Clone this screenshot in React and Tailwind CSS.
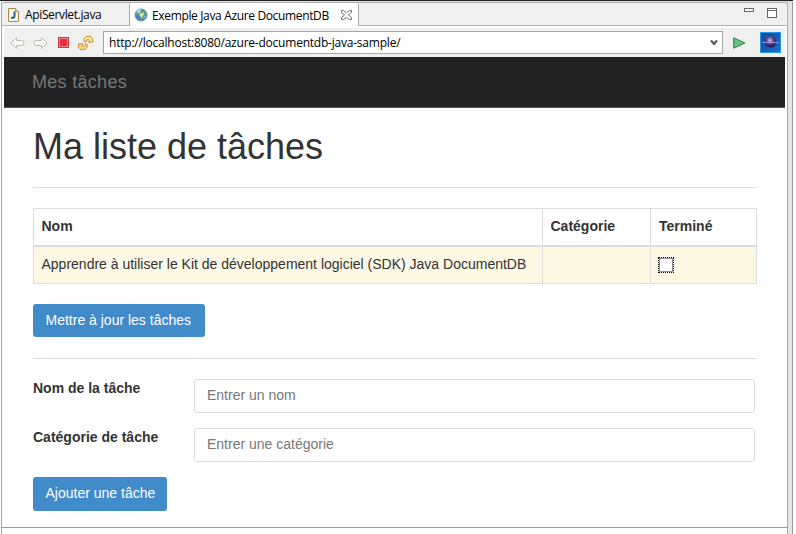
import React from 'react';

function JavaFile() {
  return (
    <svg className="h-[14px] w-[11px] shrink-0" viewBox="0 0 11 14">
      <path d="M.5.5h7l3 3v10H.5z" fill="#fdfbe9" stroke="#a88a45" />
      <path d="M7.500.5v3h3" fill="#f1dc9b" stroke="#c49b3e" />
      <path d="M6.500 3.500V8q0 2.300-3.500 1.600" fill="none" stroke="#28609b" strokeWidth="2" />
    </svg>
  );
}

function Globe() {
  return (
    <svg className="h-[14px] w-[14px] shrink-0" viewBox="0 0 14 14">
      <circle cx="7" cy="7" r="6" fill="#3f86c8" stroke="#6b8fb0" />
      <path d="M1.500 6l2-4 3-1 1 2-2 2-2 .5z" fill="#a8d5ee" />
      <path d="M3 4l3 2 2-4 3 1.500 1 2.500-2 2-2 4-2-1-1-3-3-2z" fill="#5fa374" />
      <path d="M5 3l2 3 3-2-.5 3-2 3-2-3z" fill="#eee3a0" />
      <path d="M10 8l2-.5-1 2.500-2 1z" fill="#7cc0ea" />
    </svg>
  );
}

function Arrow({ right }) {
  return (
    <svg className={right ? 'h-3 w-[15px] shrink-0 -scale-x-100' : 'h-3 w-[15px] shrink-0'} viewBox="0 0 15 12">
      <path d="M.8 6l5.700-5.300V3.500H12q2 0 2 2.500t-2 2.500H6.500v2.800z" fill="#fafaf8" stroke="#bcbcb4" />
    </svg>
  );
}

function Refresh() {
  return (
    <svg className="h-4 w-4 shrink-0" viewBox="0 0 16 16">
      <path d="M5.500 4.500L8 1.500h3L12 .8l2.700 3v3.400H10.500l1-1.700-1.500-1-2 1v1.500H6.500z" fill="#ffe9a0" stroke="#bd8420" strokeWidth=".9" strokeLinejoin="round" />
      <path d="M9.700 11.500L7.200 14.500h-3l-1 .7L.7 12.200V8.800H4.900l-1 1.700 1.500 1 2-1V9H8.700z" fill="#ffdf80" stroke="#bd8420" strokeWidth=".9" strokeLinejoin="round" />
    </svg>
  );
}

function Toolbar() {
  return (
    <div className="flex h-[29px] w-[781px] shrink-0 items-center bg-[#f0f0f0] pl-[6px] font-['Open_Sans',sans-serif]">
      <Arrow />
      <div className="w-2" />
      <Arrow right />
      <svg className="ml-[10px] h-[11px] w-[11px] shrink-0" viewBox="0 0 11 11">
        <rect x=".5" y=".5" width="10" height="10" fill="#e8303c" stroke="#c23a44" />
        <rect x="1.500" y="1.500" width="8" height="8" fill="none" stroke="#f2858b" />
      </svg>
      <div className="w-[9px]" />
      <Refresh />
      <div className="ml-[9px] flex h-[23px] w-[620px] items-center border border-[#a5a5ad] bg-white pl-[5px] pr-1 text-black">
        <span className="whitespace-nowrap text-[12px] leading-5 tracking-[-0.22px]">http://localhost:8080/azure-documentdb-java-sample/</span>
        <svg className="ml-auto h-[7px] w-[8px]" viewBox="0 0 8 7"><path d="M1 1.500l3 3.500 3-3.500" fill="none" stroke="#555" strokeWidth="2" /></svg>
      </div>
      <svg className="ml-[10px] h-3 w-[13px] shrink-0" viewBox="0 0 13 12">
        <path d="M.7.8L12 6 .7 11.200z" fill="#6cc182" stroke="#288441" />
      </svg>
      <svg className="ml-[14px] h-[21px] w-[21px] shrink-0" viewBox="0 0 21 21">
        <defs>
          <linearGradient id="sky" x2="1" y2="1"><stop stopColor="#164893" /><stop offset="1" stopColor="#1470d2" /></linearGradient>
          <radialGradient id="planet" cx=".45" cy=".35"><stop stopColor="#d8cdf0" /><stop offset=".4" stopColor="#7563a6" /><stop offset="1" stopColor="#2b1c60" /></radialGradient>
        </defs>
        <rect x=".5" y=".5" width="20" height="20" fill="url(#sky)" stroke="#2995ec" />
        <circle cx="10.500" cy="10" r="5.800" fill="url(#planet)" />
        <path d="M2 10.500h17" stroke="#8f8fd6" strokeWidth="1.200" />
      </svg>
    </div>
  );
}

function Tabs() {
  return (
    <div className="flex h-[24px] w-[786px] rounded-t-[3px] border border-l-0 border-[#b0b0b0] bg-[#f0f0f0] font-['Open_Sans',sans-serif] text-[12px] leading-5 text-black">
      <div className="flex w-[127px] shrink-0 items-center pl-[6px] pt-px">
        <JavaFile />
        <span className="ml-[6px] whitespace-nowrap tracking-[-0.36px]">ApiServlet.java</span>
      </div>
      <div className="flex h-[24px] w-[230px] shrink-0 items-center rounded-t-[3px] border-x border-[#aaa] bg-white pl-[4px]">
        <Globe />
        <span className="ml-[4px] w-[189px] whitespace-nowrap pt-px tracking-[-0.35px]">Exemple Java Azure DocumentDB</span>
        <svg className="h-[10px] w-[11px] shrink-0" viewBox="0 0 11 10"><path d="M.5.5h2l3 2 3-2h2v2L7.500 5l3 2.500v2h-2l-3-2-3 2h-2v-2l3-2.500-3-2.500z" fill="white" stroke="#707070" /></svg>
      </div>
      <div className="flex flex-1 items-start justify-end gap-[13px] pr-[10px] pt-[5px]">
        <div className="h-[4px] w-[10px] border border-[#666] bg-white" />
        <div className="h-[10px] w-[10px] border border-[#666] bg-white"><div className="mt-px h-px bg-[#666]" /></div>
      </div>
    </div>
  );
}

function Field({ label, placeholder }) {
  return (
    <div className="flex h-[34px] w-[722px]">
      <label className="w-[161px] shrink-0 text-[14px] font-bold leading-[18px]">{label}</label>
      <div className="flex w-[561px] items-center rounded-[3px] border border-[#dedede] pb-[2px] pl-[12px] text-[14px] leading-5 text-[#777]">
        {placeholder}
      </div>
    </div>
  );
}

export default function App() {
  return (
    <div className="h-[534px] w-[796px] overflow-hidden bg-white font-['Liberation_Sans',sans-serif] text-[#333]">
      <div className="h-[2px] w-[793px] border-t border-[#222] bg-[#ddd]" />
      <div className="flex h-[532px]">
        <div className="w-px shrink-0 bg-white" />
        <div className="flex w-[787px] shrink-0 flex-col border-x border-[#a6a6a6] bg-white">
          <Tabs />
          <div className="h-[2px] bg-white" />
          <div className="ml-[2px] flex h-[499px] flex-col">
            <Toolbar />
            <nav className="flex h-[51px] w-[781px] shrink-0 items-center border-b border-[#555] bg-[#222] pl-[28px] text-[18px] leading-5 tracking-[0.3px] text-[#777]">
              Mes tâches
            </nav>
            <main className="ml-[29px] w-[724px] pt-[19px] text-[14px] leading-5">
              <h1 className="h-[40px] whitespace-nowrap text-[36px] leading-10 tracking-[-0.01px]">Ma liste de tâches</h1>
              <hr className="mt-[20px] border-[#ddd]" />
              <table className="mt-[20px] w-[724px] table-fixed border-collapse text-left">
                <colgroup><col className="w-[509px]" /><col className="w-[108px]" /><col className="w-[106px]" /></colgroup>
                <thead>
                  <tr className="h-[37px]">
                    <th className="border border-b-2 border-[#ddd] px-[7.5px] pb-[2px] pt-0">Nom</th>
                    <th className="border border-b-2 border-[#ddd] px-[7.5px] pb-[2px] pt-0">Catégorie</th>
                    <th className="border border-b-2 border-[#ddd] px-2 pb-[2px] pt-0">Terminé</th>
                  </tr>
                </thead>
                <tbody>
                  <tr className="h-[38px] bg-[#fcf8e3]">
                    <td className="whitespace-nowrap border border-[#ddd] px-[7.5px] pb-[2px] pt-0">Apprendre à utiliser le Kit de développement logiciel (SDK) Java DocumentDB</td>
                    <td className="border border-[#ddd]" />
                    <td className="border border-[#ddd] px-[7px] py-0"><div className="h-4 w-4 border border-dotted border-black"><div className="h-[14px] w-[14px] border border-[#8a9098] bg-white" /></div></td>
                  </tr>
                </tbody>
              </table>
              <button className="mt-[20px] flex h-[33px] w-[172px] items-center whitespace-nowrap rounded-[3px] bg-[#428bca] pb-px pl-[12.5px] text-white">Mettre à jour les tâches</button>
              <hr className="mt-[21px] border-[#ddd]" />
              <form className="mt-[20px] flex flex-col gap-[15px]">
                <Field label="Nom de la tâche" placeholder="Entrer un nom" />
                <Field label="Catégorie de tâche" placeholder="Entrer une catégorie" />
                <button type="button" className="flex h-[34px] w-[134px] items-center whitespace-nowrap rounded-[3px] bg-[#428bca] pb-[2px] pl-[12.5px] text-white">Ajouter une tâche</button>
              </form>
            </main>
          </div>
          <div className="h-px shrink-0 bg-[#999]" />
        </div>
        <div className="w-[4px] bg-[#e5e5e5]" />
        <div className="w-px bg-[#999]" />
      </div>
    </div>
  );
}
